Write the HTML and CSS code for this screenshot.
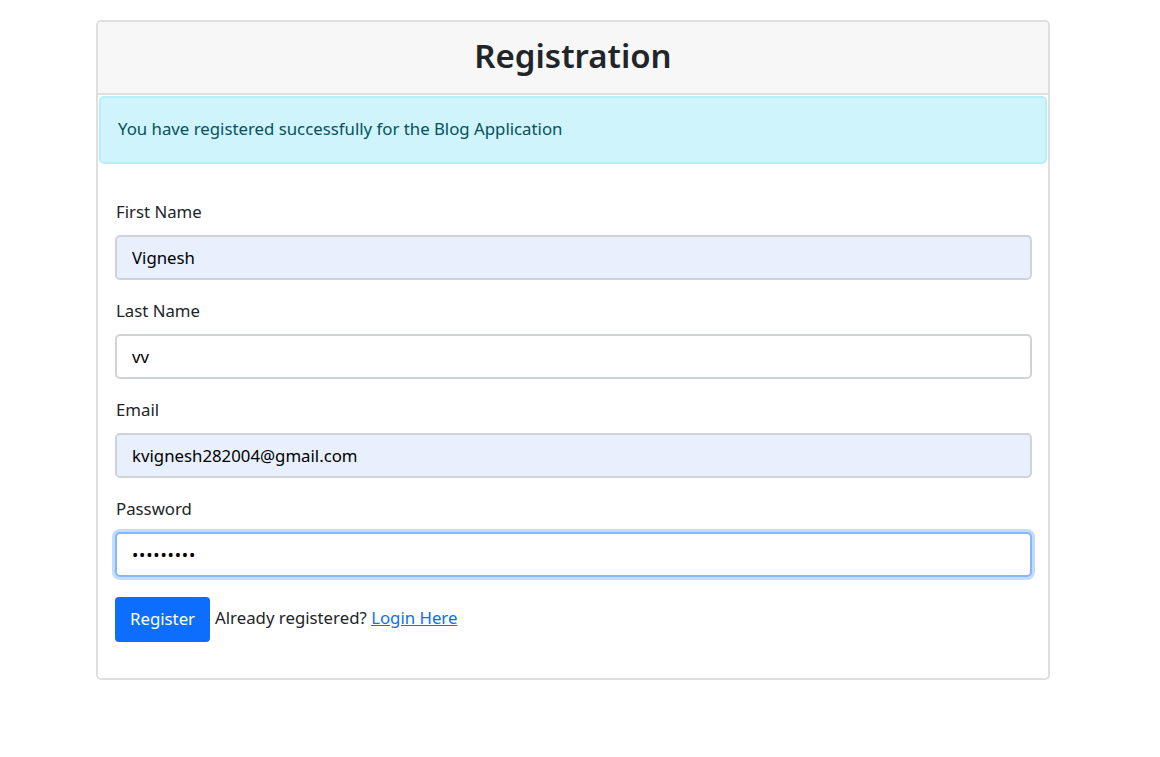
FILE: index.html
```html
<!DOCTYPE html>
<html lang="en">
<head>
<meta charset="utf-8">
<title>Registration</title>
<link rel="stylesheet" href="styles.css">
</head>
<body>
<div class="page">
  <div class="card">
    <div class="card-header">
      <h2 class="title">Registration</h2>
    </div>
    <div class="alert">You have registered successfully for the Blog Application</div>
    <div class="card-body">
      <form class="form">
        <div class="group">
          <label class="label" for="fn">First Name</label>
          <input class="input autofill" id="fn" type="text" value="Vignesh">
        </div>
        <div class="group">
          <label class="label" for="ln">Last Name</label>
          <input class="input" id="ln" type="text" value="vv">
        </div>
        <div class="group">
          <label class="label" for="em">Email</label>
          <input class="input autofill" id="em" type="email" value="kvignesh282004@gmail.com">
        </div>
        <div class="group">
          <label class="label" for="pw">Password</label>
          <input class="input focused password" id="pw" type="password" value="123456789">
        </div>
        <div class="actions">
          <button class="btn" type="button">Register</button>
          <span class="note">Already registered? <a class="link" href="#">Login Here</a></span>
        </div>
      </form>
    </div>
  </div>
</div>
</body>
</html>
```

FILE: styles.css
```css
html, body {
  margin: 0;
  padding: 0;
  background: #ffffff;
}
body {
  font-family: "Noto Sans", "Open Sans", sans-serif;
  font-size: 16.8px;
  color: #212529;
}
.page {
  padding-top: 20px;
  padding-left: 96px;
}
.card {
  width: 954px;
  box-sizing: border-box;
  border: 2px solid #dfdfdf;
  border-radius: 5px;
  overflow: hidden;
}
.card-header {
  background: #f7f7f7;
  border-bottom: 2px solid #dfdfdf;
  height: 67px;
  padding-bottom: 4px;
  display: flex;
  align-items: center;
  justify-content: center;
}
.title {
  margin: 0;
  font-size: 33px;
  font-weight: 600;
  line-height: 1.2;
  color: #212529;
}
.alert {
  margin: 1px 1px 0 1px;
  height: 68px;
  box-sizing: border-box;
  background: #cff4fc;
  border: 2px solid #b6effb;
  border-radius: 5px;
  color: #055160;
  padding: 0 17px 3px 17px;
  display: flex;
  align-items: center;
}
.card-body {
  padding: 35px 16px 36px 17px;
}
.form {
  display: flex;
  flex-direction: column;
}
.group {
  display: flex;
  flex-direction: column;
  margin-bottom: 18px;
}
.label {
  line-height: 26px;
  margin-bottom: 10px;
  padding-left: 1px;
}
.input {
  height: 45px;
  box-sizing: border-box;
  border: 2px solid #cfd3d8;
  border-radius: 5px;
  padding: 0 15px;
  font-family: inherit;
  font-size: 16.8px;
  color: #000;
  background: #fff;
  outline: none;
}
.autofill {
  background: #e8f0fe;
}
.focused {
  border-color: #86b7fe;
  box-shadow: 0 0 0 3px rgba(13, 110, 253, 0.25);
}
.password {
  letter-spacing: 0.8px;
}
.actions {
  display: flex;
  align-items: center;
  gap: 5px;
  margin-top: 2px;
}
.btn {
  height: 45px;
  padding: 0 15px 3px 15px;
  background: #0d6efd;
  color: #fff;
  border: none;
  border-radius: 4px;
  font-family: inherit;
  font-size: 16.8px;
}
.note {
  line-height: 26px;
  padding-bottom: 3px;
}
.link {
  color: #0d6efd;
  text-decoration: underline;
}
```
